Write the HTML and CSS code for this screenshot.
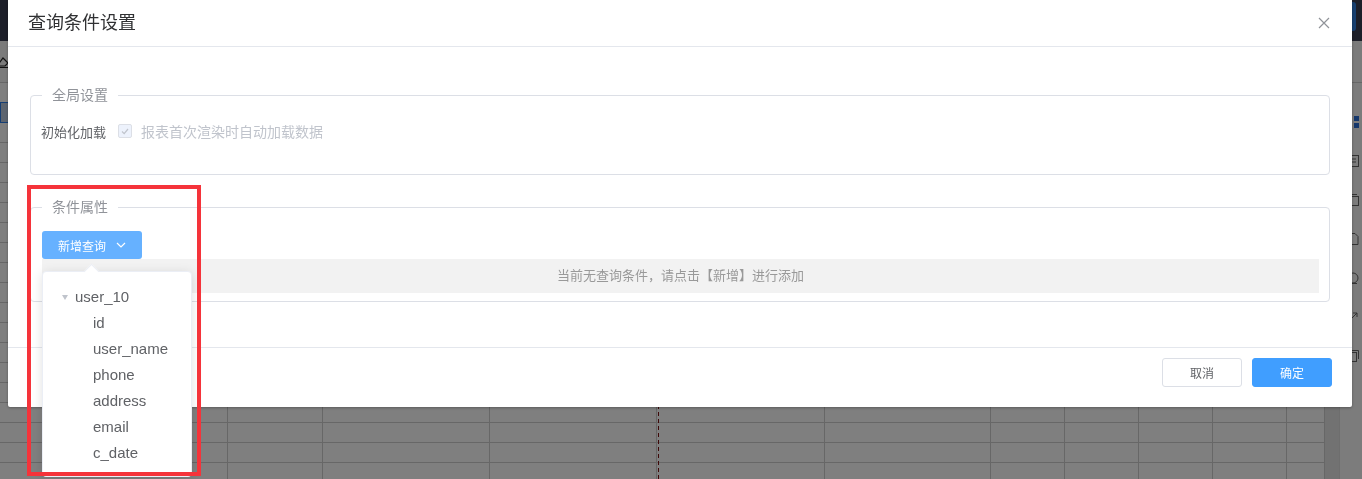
FILE: index.html
```html
<!DOCTYPE html>
<html lang="zh-CN">
<head>
    <meta charset="UTF-8">
    <meta name="viewport" content="width=device-width, initial-scale=1.0">
    <title>查询条件设置</title>
    <link rel="stylesheet" href="styles.css">
</head>
<body>
    <!-- 背景：报表设计器 -->
    <div class="app">
        <div class="topbar"><span class="top-btn"></span></div>
        <div class="toolbar">
            <svg class="tool-icon" width="14" height="14" viewBox="0 0 14 14"><path d="M1 11 L7 3 L12 8 L9 11 Z M0 12.5 H13" fill="none" stroke="#222" stroke-width="1.2"/></svg>
        </div>
        <div class="sheet">
            <div class="grid">
                <div class="col"><div class="sel-cell"></div></div>
                <div class="col"></div>
                <div class="col"></div>
                <div class="col"></div>
                <div class="col page-break"></div>
                <div class="col"></div>
                <div class="col"></div>
                <div class="col"></div>
                <div class="col"></div>
                <div class="col"></div>
                <div class="col"></div>
            </div>
            <div class="scroll"></div>
            <div class="sidebar">
                <svg width="14" height="14" viewBox="0 0 14 14"><path d="M1 1h5v5H1zM8 1h5v5H8zM1 8h5v5H1zM8 8h5v5H8z" fill="#2b6fd6"/></svg>
                <svg width="14" height="14" viewBox="0 0 14 14"><rect x="1.5" y="1.5" width="11" height="11" fill="none" stroke="#666"/><path d="M4 5h6M4 8h6" stroke="#666"/></svg>
                <svg width="14" height="14" viewBox="0 0 14 14"><rect x="1.5" y="3.5" width="11" height="9" fill="none" stroke="#666"/><path d="M3 1.5h8" stroke="#666"/></svg>
                <svg width="14" height="14" viewBox="0 0 14 14"><path d="M2 12.5h10V4.5L9 1.5H2z" fill="none" stroke="#666"/></svg>
                <svg width="14" height="14" viewBox="0 0 14 14"><circle cx="7" cy="7" r="5" fill="none" stroke="#666"/><path d="M4 12.5h7" stroke="#666"/></svg>
                <svg width="14" height="14" viewBox="0 0 14 14"><path d="M3 11 L11 3 M7 3h4v4" fill="none" stroke="#666"/></svg>
                <svg width="14" height="14" viewBox="0 0 14 14"><rect x="1.5" y="3.5" width="9" height="9" fill="none" stroke="#666"/><path d="M4 1.5h8.5v8.5" fill="none" stroke="#666"/></svg>
            </div>
        </div>
    </div>

    <div class="mask"></div>

    <!-- 弹窗 -->
    <div class="dialog">
        <div class="dialog-header">
            <span class="dialog-title">查询条件设置</span>
            <svg class="close" width="12" height="12" viewBox="0 0 12 12"><path d="M1 1L11 11M11 1L1 11" stroke="#909399" stroke-width="1.2"/></svg>
        </div>

        <div class="dialog-body">
            <fieldset class="group global">
                <legend>全局设置</legend>
                <div class="form-row">
                    <span class="form-label">初始化加载</span>
                    <span class="checkbox">
                        <svg width="8" height="7" viewBox="0 0 8 7"><path d="M1 3.5L3.2 5.6L7 1" fill="none" stroke="#c0c4cc" stroke-width="1.2"/></svg>
                    </span>
                    <span class="check-text">报表首次渲染时自动加载数据</span>
                </div>
            </fieldset>

            <fieldset class="group cond">
                <legend>条件属性</legend>
                <button class="btn-add">新增查询
                    <svg width="10" height="6" viewBox="0 0 10 6"><path d="M1 1L5 5L9 1" fill="none" stroke="#fff" stroke-width="1.2"/></svg>
                </button>
                <div class="empty">当前无查询条件，请点击【新增】进行添加</div>
            </fieldset>
        </div>

        <div class="dialog-footer">
            <button class="btn">取消</button>
            <button class="btn btn-primary">确定</button>
        </div>
    </div>

    <!-- 新增查询下拉 -->
    <div class="dropdown">
        <ul class="tree">
            <li class="node-root"><span class="caret"></span>user_10</li>
            <li>id</li>
            <li>user_name</li>
            <li>phone</li>
            <li>address</li>
            <li>email</li>
            <li>c_date</li>
        </ul>
    </div>

    <!-- 标注框 -->
    <div class="mark"></div>
</body>
</html>
```

FILE: styles.css
```css
*{
    margin: 0;
    padding: 0;
    box-sizing: border-box;
    list-style: none;
}
body{
    font-family: "Liberation Sans", "Noto Sans CJK SC", sans-serif;
    font-size: 14px;
    color: #606266;
    overflow: hidden;
}

/* 背景 */
.app{
    height: 100vh;
    display: flex;
    flex-direction: column;
    background: #ffffff;
}
.topbar{
    height: 41px;
    flex: none;
    background: #3a3e52;
    display: flex;
    justify-content: flex-end;
    padding: 2px 6px 0 0;
}
.top-btn{
    width: 60px;
    height: 29px;
    background: #2f7fe0;
    border-radius: 3px;
}
.toolbar{
    height: 42px;
    flex: none;
    background: #f7f7f7;
    border-bottom: 1px solid #cecece;
    display: flex;
    align-items: center;
    padding-left: 0;
}
.tool-icon{
    margin-left: -4px;
}
.sheet{
    flex: 1;
    display: flex;
}
.grid{
    flex: 1;
    display: grid;
    grid-template-columns: 228px 95px 167px 167px 168px 166px 74px 74px 74px 74px 38px;
    background: repeating-linear-gradient(to bottom, transparent 0 19px, #cecece 19px 20px);
}
.col{
    border-right: 1px solid #cecece;
}
.page-break{
    background: repeating-linear-gradient(to bottom, #7a1010 0 4px, transparent 4px 7px) 1px 0 / 1px 100% no-repeat;
}
.sel-cell{
    margin-top: 19px;
    height: 21px;
    border: 1px solid #2b7de9;
    background: #b8c9df;
}
.scroll{
    width: 14px;
    background: #e4e4e4;
}
.sidebar{
    width: 23px;
    background: #f8f8f8;
    border-left: 1px solid #dddddd;
    display: flex;
    flex-direction: column;
    align-items: center;
    gap: 25px;
    padding-top: 32px;
    padding-left: 4px;
}

.mask{
    position: fixed;
    inset: 0;
    background: rgba(0, 0, 0, 0.5);
}

/* 弹窗 */
.dialog{
    position: fixed;
    left: 8px;
    top: 0;
    width: 1344px;
    background: #ffffff;
    border-radius: 0 0 2px 2px;
    box-shadow: 0 1px 3px rgba(0, 0, 0, 0.3);
}
.dialog-header{
    height: 47px;
    border-bottom: 1px solid #e4e7ed;
    display: flex;
    align-items: center;
    justify-content: space-between;
    padding: 0 22px 0 20px;
}
.dialog-title{
    font-size: 18px;
    line-height: 24px;
    color: #303133;
}
.dialog-body{
    padding: 38px 22px 45px;
}
.group{
    border: 1px solid #dcdfe6;
    border-radius: 4px;
    padding: 0 10px 0 10px;
}
.group legend{
    padding: 0 10px;
    margin-left: 1px;
    font-size: 14px;
    line-height: 20px;
    color: #909399;
}
.global{
    padding-top: 16px;
    padding-bottom: 33px;
}
.cond{
    margin-top: 22px;
    padding-top: 14px;
    padding-bottom: 8px;
    padding-left: 11px;
}
.cond legend{
    margin-left: 0;
}
.form-row{
    display: flex;
    align-items: center;
    height: 20px;
}
.form-label{
    font-size: 13px;
    color: #606266;
    margin-right: 12px;
}
.checkbox{
    width: 14px;
    height: 14px;
    border: 1px solid #dcdfe6;
    border-radius: 2px;
    background: #edf2fc;
    display: flex;
    align-items: center;
    justify-content: center;
    margin-right: 9px;
}
.check-text{
    font-size: 14px;
    color: #c0c4cc;
}
.btn-add{
    width: 100px;
    height: 28px;
    border: none;
    border-radius: 3px;
    background: #66b1ff;
    color: #ffffff;
    font-family: inherit;
    font-size: 12px;
    display: flex;
    align-items: center;
    justify-content: center;
    gap: 10px;
}
.empty{
    height: 34px;
    line-height: 34px;
    background: #f2f2f2;
    text-align: center;
    font-size: 13px;
    color: #999999;
}
.dialog-footer{
    border-top: 1px solid #e4e7ed;
    padding: 10px 20px 20px;
    display: flex;
    justify-content: flex-end;
    gap: 10px;
}
.btn{
    width: 80px;
    height: 29px;
    border: 1px solid #dcdfe6;
    border-radius: 3px;
    background: #ffffff;
    color: #606266;
    font-family: inherit;
    font-size: 12px;
}
.btn-primary{
    background: #409eff;
    border-color: #409eff;
    color: #ffffff;
}

/* 下拉树 */
.dropdown{
    position: fixed;
    left: 42px;
    top: 271px;
    width: 150px;
    height: 206px;
    background: #ffffff;
    border: 1px solid #ebeef5;
    border-radius: 4px;
    box-shadow: 0 2px 12px rgba(0, 0, 0, 0.12);
    padding: 12px 0 0 19px;
}
.dropdown::before{
    content: "";
    position: absolute;
    left: 43px;
    top: -6px;
    width: 10px;
    height: 10px;
    background: #ffffff;
    border-left: 1px solid #ebeef5;
    border-top: 1px solid #ebeef5;
    transform: rotate(45deg);
}
.tree li{
    height: 26px;
    line-height: 26px;
    font-size: 15px;
    color: #606266;
    padding-left: 31px;
}
.tree .node-root{
    padding-left: 0;
    display: flex;
    align-items: center;
}
.caret{
    width: 0;
    height: 0;
    border-left: 3.5px solid transparent;
    border-right: 3.5px solid transparent;
    border-top: 5px solid #c0c4cc;
    margin-right: 7px;
}

/* 红色标注 */
.mark{
    position: fixed;
    left: 27px;
    top: 185px;
    width: 174px;
    height: 291px;
    border: 4px solid #f5333a;
}
```
